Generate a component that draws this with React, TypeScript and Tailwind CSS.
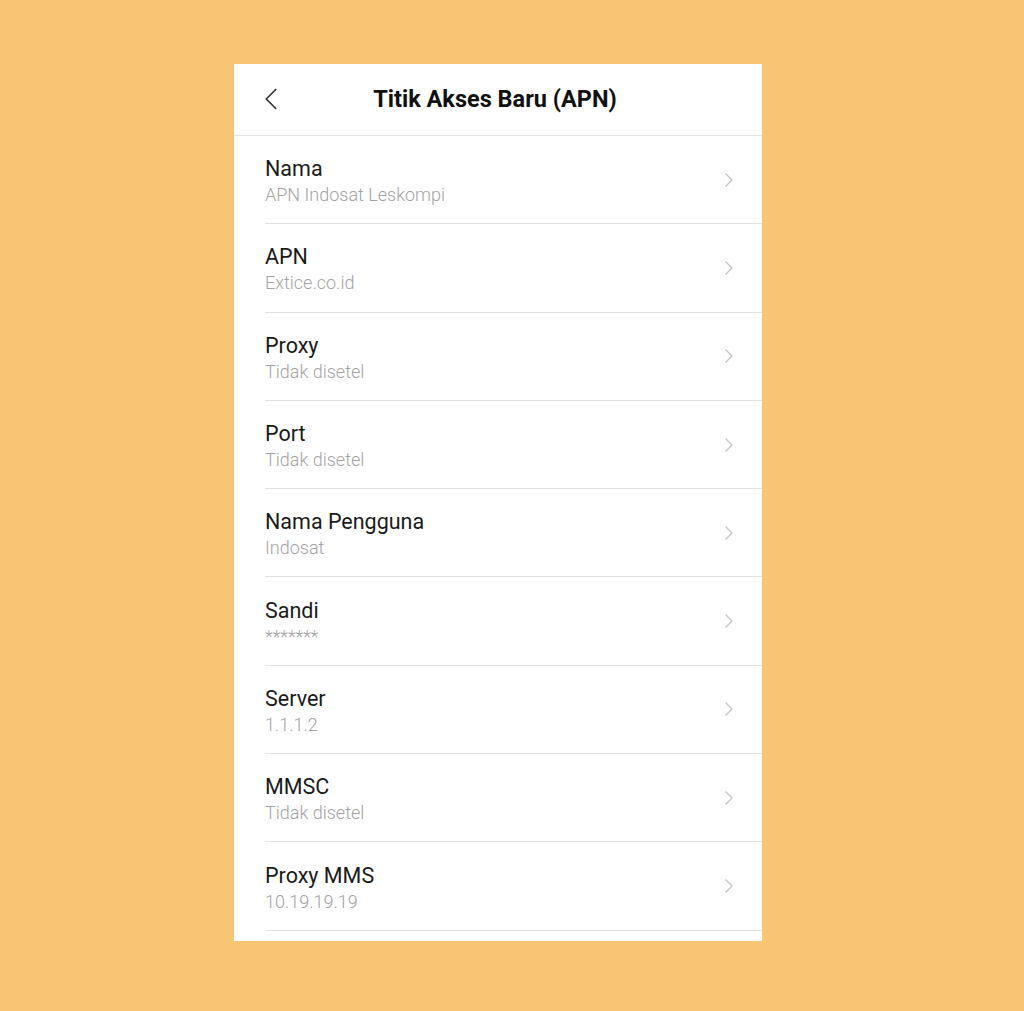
import { ChevronLeft, ChevronRight } from "lucide-react";

const rows = [
  { label: "Nama", value: "APN Indosat Leskompi" },
  { label: "APN", value: "Extice.co.id" },
  { label: "Proxy", value: "Tidak disetel" },
  { label: "Port", value: "Tidak disetel" },
  { label: "Nama Pengguna", value: "Indosat" },
  { label: "Sandi", value: "*******" },
  { label: "Server", value: "1.1.1.2" },
  { label: "MMSC", value: "Tidak disetel" },
  { label: "Proxy MMS", value: "10.19.19.19" },
];

export default function App() {
  return (
    <div className="min-h-[1011px] w-full bg-[#f8c574] pt-16 font-['Roboto',sans-serif]">
      <div className="ml-[234px] w-[528px] bg-white pb-[10px]">
        {/* Header */}
        <div className="relative flex h-[72px] items-center justify-center border-b border-[#e4e4e4]">
          <ChevronLeft
            className="absolute left-[18px] top-[16px] h-[38px] w-[38px] text-[#333]"
            strokeWidth={1.1}
          />
          <h1 className="pr-[6px] text-[23.5px] font-bold text-[#111]">
            Titik Akses Baru (APN)
          </h1>
        </div>

        {/* Rows */}
        <div className="pl-[31px]">
          {rows.map((r) => (
            <div
              key={r.label}
              className="flex h-[88.3px] items-center border-b border-[#e2e2e2] pr-[21px]"
            >
              <div className="flex flex-1 flex-col gap-[2px] pt-[3px]">
                <span className="text-[21.5px] leading-[26px] text-[#1a1a1a]">
                  {r.label}
                </span>
                <span className="text-[18px] font-light leading-[22px] text-[#a3a3a3]">
                  {r.value}
                </span>
              </div>
              <ChevronRight
                className="h-[24px] w-[24px] text-[#c4c4c4]"
                strokeWidth={1.3}
              />
            </div>
          ))}
        </div>
      </div>
    </div>
  );
}
